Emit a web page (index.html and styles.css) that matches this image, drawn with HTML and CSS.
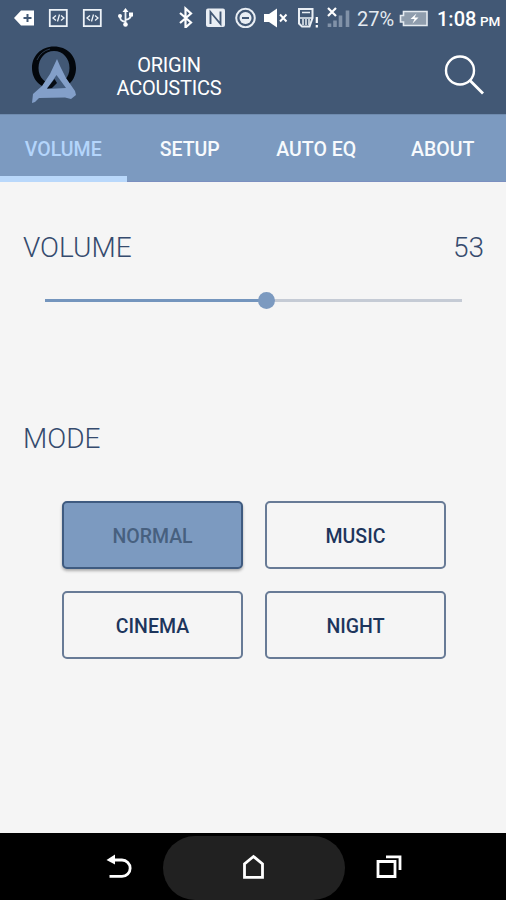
FILE: index.html
```html
<!DOCTYPE html>
<html lang="en">
<head>
  <meta charset="UTF-8">
  <title>Origin Acoustics</title>
  <link rel="stylesheet" href="styles.css">
</head>
<body>
  <header class="header">
    <div class="status">
      <svg class="status-left" width="137" height="28" viewBox="0 0 137 28">
        <path d="M14 18l7-7.500h13v15H21z" fill="#fff"/>
        <path d="M23.500 18h8M27.500 14v8" stroke="#425875" stroke-width="2"/>
        <g fill="none" stroke="#eef3f8" stroke-width="1.800">
          <path d="M49.800 9.800h17v16.400h-17zM83.800 9.800h17v16.400h-17z"/>
          <path d="M56 15.500l-3 2.500 3 2.500M61 15.500l3 2.500-3 2.500M59.500 14.500l-2 7M90 15.500l-3 2.500 3 2.500M95 15.500l3 2.500-3 2.500M93.500 14.500l-2 7" stroke-width="1.300"/>
          <path d="M125.500 11v14M125.500 22c-4-1-5.500-2-5.500-6M125.500 20c4-1 5.500-2 5.500-5"/>
        </g>
        <path d="M125.500 8l3 4h-6zM129 12.500h4v4h-4z" fill="#fff"/>
        <circle cx="120" cy="16" r="2" fill="#fff"/>
        <circle cx="125.500" cy="24.500" r="2.300" fill="#fff"/>
      </svg>
      <svg class="status-right" width="176" height="28" viewBox="176 0 176 28">
        <path d="M180 13l11 9.500-5.500 5V8.500l5.500 5-11 9.500" fill="none" stroke="#fff" stroke-width="2.200"/>
        <rect x="206" y="8.500" width="19" height="18.500" rx="2" fill="#e9eef4"/>
        <path d="M210.500 24V12l10 12V11.500" fill="none" stroke="#425875" stroke-width="1.900"/>
        <circle cx="245.500" cy="18" r="9.300" fill="none" stroke="#e9eef4" stroke-width="2"/>
        <circle cx="245.500" cy="18" r="6" fill="#e9eef4"/>
        <path d="M242 18h7" stroke="#425875" stroke-width="2"/>
        <path d="M264 14h5l8-5.500v19l-8-5.500h-5z" fill="#fff"/>
        <path d="M280 14.500l6.500 7M286.500 14.500l-6.500 7" stroke="#fff" stroke-width="2"/>
        <path d="M299 9h13.500v9l-3 8.500H302l-3-3z" fill="none" stroke="#e9eef4" stroke-width="2"/>
        <path d="M302 12.500h8M300 18h12M303 19v6M306 19v6M309 19v6" stroke="#e9eef4" stroke-width="1.500"/>
        <path d="M316.800 17v6M316.800 25v2.500" stroke="#fff" stroke-width="2.200"/>
        <path d="M328 8l8 8M336 8l-8 8" stroke="#fff" stroke-width="2.200"/>
        <path d="M329.500 23.500V27M335 20.500V27M340.500 15.500V27M347.500 10.500V27" stroke="#8192a8" stroke-width="3.600"/>
      </svg>
      <span class="percent">27%</span>
      <svg class="battery" width="30" height="18" viewBox="0 0 30 18">
        <path d="M4.500 1.500h23.500v14H4.500v-3.500H1.500V5.500h3z" fill="#8f9dad" stroke="#e4eaf0" stroke-width="1.600"/>
        <path d="M17.500 3.500l-6 5.500h4l-2 4.500 6-6h-4z" fill="#fff"/>
      </svg>
      <span class="time">1:08</span>
      <span class="ampm">PM</span>
    </div>
    <div class="brand">
      <svg class="logo" width="52" height="64" viewBox="28 42 52 64">
        <path d="M54 46.500c13 0 22 9 22 21.500s-9 21-22 21-22-9-22-21 9-21.500 22-21.500zM54 51c-9 0-15.500 7.500-15.500 17S45 84 54 84s15.500-6.500 15.500-16S63 51 54 51z" fill="#03070c" fill-rule="evenodd"/>
        <path d="M37 60q4-9 13-11" fill="none" stroke="#2c3b50" stroke-width="1"/>
        <path d="M57 59l3 7 6 12 9 13 1 4-5 4-6-1.500-26 .5-4 4-3 1 1-9 9-8 8-12z" fill="#839fc9"/>
        <path d="M56.500 75l-9.500 14 19-1z" fill="#435b7c"/>
        <path d="M54.500 79l-7.500 9.500 5-.5 5-5z" fill="#050a12"/>
      </svg>
      <h1 class="brand-name">ORIGIN<br>ACOUSTICS</h1>
      <svg class="search" width="42" height="42" viewBox="444 54 42 42">
        <circle cx="460" cy="70.500" r="14" fill="none" stroke="#fff" stroke-width="2.400"/>
        <path d="M470 80.500l13 13" stroke="#fff" stroke-width="2.800"/>
      </svg>
    </div>
  </header>

  <nav class="tabs">
    <a class="tab active">VOLUME</a>
    <a class="tab">SETUP</a>
    <a class="tab">AUTO EQ</a>
    <a class="tab">ABOUT</a>
  </nav>

  <main class="content">
    <div class="row">
      <h2 class="label">VOLUME</h2>
      <span class="label value">53</span>
    </div>
    <div class="slider">
      <div class="slider-fill" style="width: 53%"></div>
      <div class="slider-thumb"></div>
      <div class="slider-rest"></div>
    </div>
    <h2 class="label mode-label">MODE</h2>
    <div class="modes">
      <button class="mode selected">NORMAL</button>
      <button class="mode">MUSIC</button>
      <button class="mode">CINEMA</button>
      <button class="mode">NIGHT</button>
    </div>
  </main>

  <footer class="navbar">
    <svg width="28" height="28" viewBox="105 853 28 28">
      <path d="M111 860h11a8 8 0 0 1 0 16.300h-12.500" fill="none" stroke="#fff" stroke-width="2.800"/>
      <path d="M106.500 860l8.500-5.500v10z" fill="#fff"/>
    </svg>
    <div class="home">
      <svg width="28" height="28" viewBox="240 853 28 28">
        <path d="M244.500 876.300v-13.300l9-7.500 9 7.500v13.300z" fill="none" stroke="#fff" stroke-width="2.800"/>
      </svg>
    </div>
    <svg width="28" height="28" viewBox="375 853 28 28">
      <path d="M378 861.500h17v15h-17zM386 856.800h14v13.200" fill="none" stroke="#fff" stroke-width="2.800"/>
    </svg>
  </footer>
</body>
</html>
```

FILE: styles.css
```css
* {
  box-sizing: border-box;
}
body {
  margin: 0;
  height: 900px;
  display: flex;
  flex-direction: column;
  overflow: hidden;
  font-family: Roboto, sans-serif;
  background-color: #f5f5f5;
  color: #1d355c;
}
svg {
  display: block;
  flex: none;
}
.header {
  height: 114px;
  background-color: #425875;
  color: #fff;
}
.status {
  display: flex;
  height: 38px;
  line-height: 38px;
  font-size: 20px;
  white-space: nowrap;
}
.status-right {
  margin-left: 39px;
}
.percent {
  width: 42px;
  padding-left: 5px;
  color: #e4eaf0;
}
.battery {
  margin: 10px 0 0 5px;
}
.time {
  width: 42px;
  margin-left: 8px;
  font-weight: 500;
}
.ampm {
  margin-left: 1px;
  padding-top: 2px;
  font-size: 13.5px;
  font-weight: 500;
}
.brand {
  display: flex;
  align-items: flex-start;
  padding: 4px 20px 0 28px;
}
.brand-name {
  width: 120px;
  margin: 12px auto 0 29px;
  font-size: 20px;
  font-weight: 400;
  line-height: 23px;
  letter-spacing: -0.2px;
  text-align: center;
}
.search {
  margin-top: 12px;
}
.tabs {
  display: flex;
  height: 68px;
  background-color: #7c9ac0;
  border-top: 1px solid #6f8bae;
  border-bottom: 1px solid #7b8fc0;
}
.tab {
  flex: 1;
  padding-top: 23px;
  font-size: 19.5px;
  font-weight: 500;
  line-height: 24px;
  text-align: center;
  color: #f7fafd;
}
.tab.active {
  margin-bottom: -1px;
  color: #b4d5fb;
  border-bottom: 6px solid #b9d8fb;
}
.content {
  flex: 1;
  padding: 48px 22px 0 23px;
}
.row {
  display: flex;
  justify-content: space-between;
}
.label {
  margin: 0;
  font-size: 28px;
  font-weight: 300;
  line-height: 36px;
  color: #354b6e;
}
.slider {
  display: flex;
  align-items: center;
  height: 18px;
  margin: 25px 22px 0 22px;
}
.slider-fill {
  height: 3px;
  background-color: #7495bd;
}
.slider-thumb {
  flex: none;
  width: 17px;
  height: 17px;
  margin: 0 -8px;
  border-radius: 50%;
  background-color: #7c9ac0;
  z-index: 1;
}
.slider-rest {
  flex: 1;
  height: 3px;
  background-color: #c5cbd5;
}
.mode-label {
  margin-top: 112px;
}
.modes {
  display: grid;
  grid-template-columns: 181px 181px;
  gap: 22px;
  margin: 44px 0 0 39px;
}
.mode {
  height: 68px;
  padding: 2px 0 0;
  font-family: inherit;
  font-size: 19.5px;
  font-weight: 500;
  color: #1d355c;
  background-color: transparent;
  border: 2px solid #687b96;
  border-radius: 5px;
}
.mode.selected {
  color: #47607f;
  background-color: #7c9ac0;
  border-color: #3f5b80;
  box-shadow: 0 2px 3px rgba(0, 0, 0, 0.3);
}
.navbar {
  display: flex;
  align-items: center;
  height: 67px;
  padding: 0 103px 0 105px;
  justify-content: space-between;
  background-color: #000;
}
.home {
  display: flex;
  align-items: center;
  justify-content: center;
  width: 182px;
  height: 64px;
  margin-top: 2px;
  border-radius: 32px;
  background-color: #212121;
}
```
